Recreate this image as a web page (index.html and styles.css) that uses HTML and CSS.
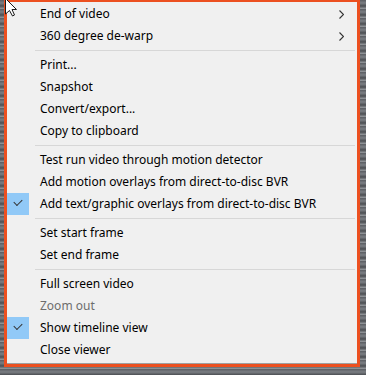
FILE: index.html
```html
<!DOCTYPE html>
<html lang="en">
<head>
  <meta charset="UTF-8" />
  <meta name="viewport" content="width=device-width, initial-scale=1.0"/>
  <title>Viewer menu</title>
  <link rel="stylesheet" href="styles.css">
</head>
<body>
  <div class="backdrop">
    <div class="menu">
      <div class="item">End of video<span class="arrow"><svg width="5" height="9" viewBox="0 0 5 9"><path d="M0.5 0.5 L4.5 4.5 L0.5 8.5" fill="none" stroke="#333" stroke-width="1.1"/></svg></span></div>
      <div class="item">360 degree de-warp<span class="arrow"><svg width="5" height="9" viewBox="0 0 5 9"><path d="M0.5 0.5 L4.5 4.5 L0.5 8.5" fill="none" stroke="#333" stroke-width="1.1"/></svg></span></div>
      <div class="sep"></div>

      <div class="item">Print...</div>
      <div class="item">Snapshot</div>
      <div class="item">Convert/export...</div>
      <div class="item">Copy to clipboard</div>
      <div class="sep"></div>

      <div class="item">Test run video through motion detector</div>
      <div class="item">Add motion overlays from direct-to-disc BVR</div>
      <div class="item checked">Add text/graphic overlays from direct-to-disc BVR</div>
      <div class="sep"></div>

      <div class="item">Set start frame</div>
      <div class="item">Set end frame</div>
      <div class="sep"></div>

      <div class="item">Full screen video</div>
      <div class="item disabled">Zoom out</div>
      <div class="item checked">Show timeline view</div>
      <div class="item">Close viewer</div>
    </div>
  </div>

  <!-- mouse pointer sitting over the menu corner -->
  <svg class="cursor" width="13" height="19" viewBox="0 0 13 19">
    <path d="M0.5 0.5 L0.5 16 L4.5 12.5 L7.5 18 L9.5 17 L7 11.5 L11.5 11.5 Z" fill="#fff" stroke="#1a1a1a" stroke-width="1"/>
  </svg>
</body>
</html>
```

FILE: styles.css
```css
body {
  margin: 0;
  font-family: 'Noto Sans', 'Open Sans', sans-serif;
  font-size: 12px;
  color: #000;
  overflow: hidden;
}

.backdrop {
  width: 366px;
  height: 375px;
  background:
    repeating-linear-gradient(180deg, #5a5d62 0, #7b7f84 3px, #4b4e52 6px, #9a9ea2 9px),
    #666;
  position: relative;
}

.menu {
  position: absolute;
  left: 4px;
  top: 0;
  width: 350px;
  background-color: #f0f0f0;
  border: 3px solid #ec5020;
  border-top-width: 2px;
  padding: 1px 0 3px;
  box-shadow: inset 0 -1px 0 #a0a0a0;
}

.item {
  position: relative;
  height: 22px;
  line-height: 22px;
  padding-left: 33px;
  white-space: nowrap;
}

.item.disabled {
  color: #6d6d6d;
}

.item.checked::before {
  content: "";
  position: absolute;
  left: 0;
  top: 0;
  width: 22px;
  height: 22px;
  background-color: #91c9f7;
}

.item.checked::after {
  content: "";
  position: absolute;
  left: 7px;
  top: 6px;
  width: 7px;
  height: 4px;
  border-left: 1.5px solid #333;
  border-bottom: 1.5px solid #333;
  transform: rotate(-45deg);
}

.arrow {
  position: absolute;
  right: 13px;
  top: 7px;
  line-height: 0;
}

.sep {
  height: 1px;
  margin: 3px 2px 3px 28px;
  background-color: #d7d7d7;
}

.cursor {
  position: absolute;
  left: 5px;
  top: -2px;
}
```
